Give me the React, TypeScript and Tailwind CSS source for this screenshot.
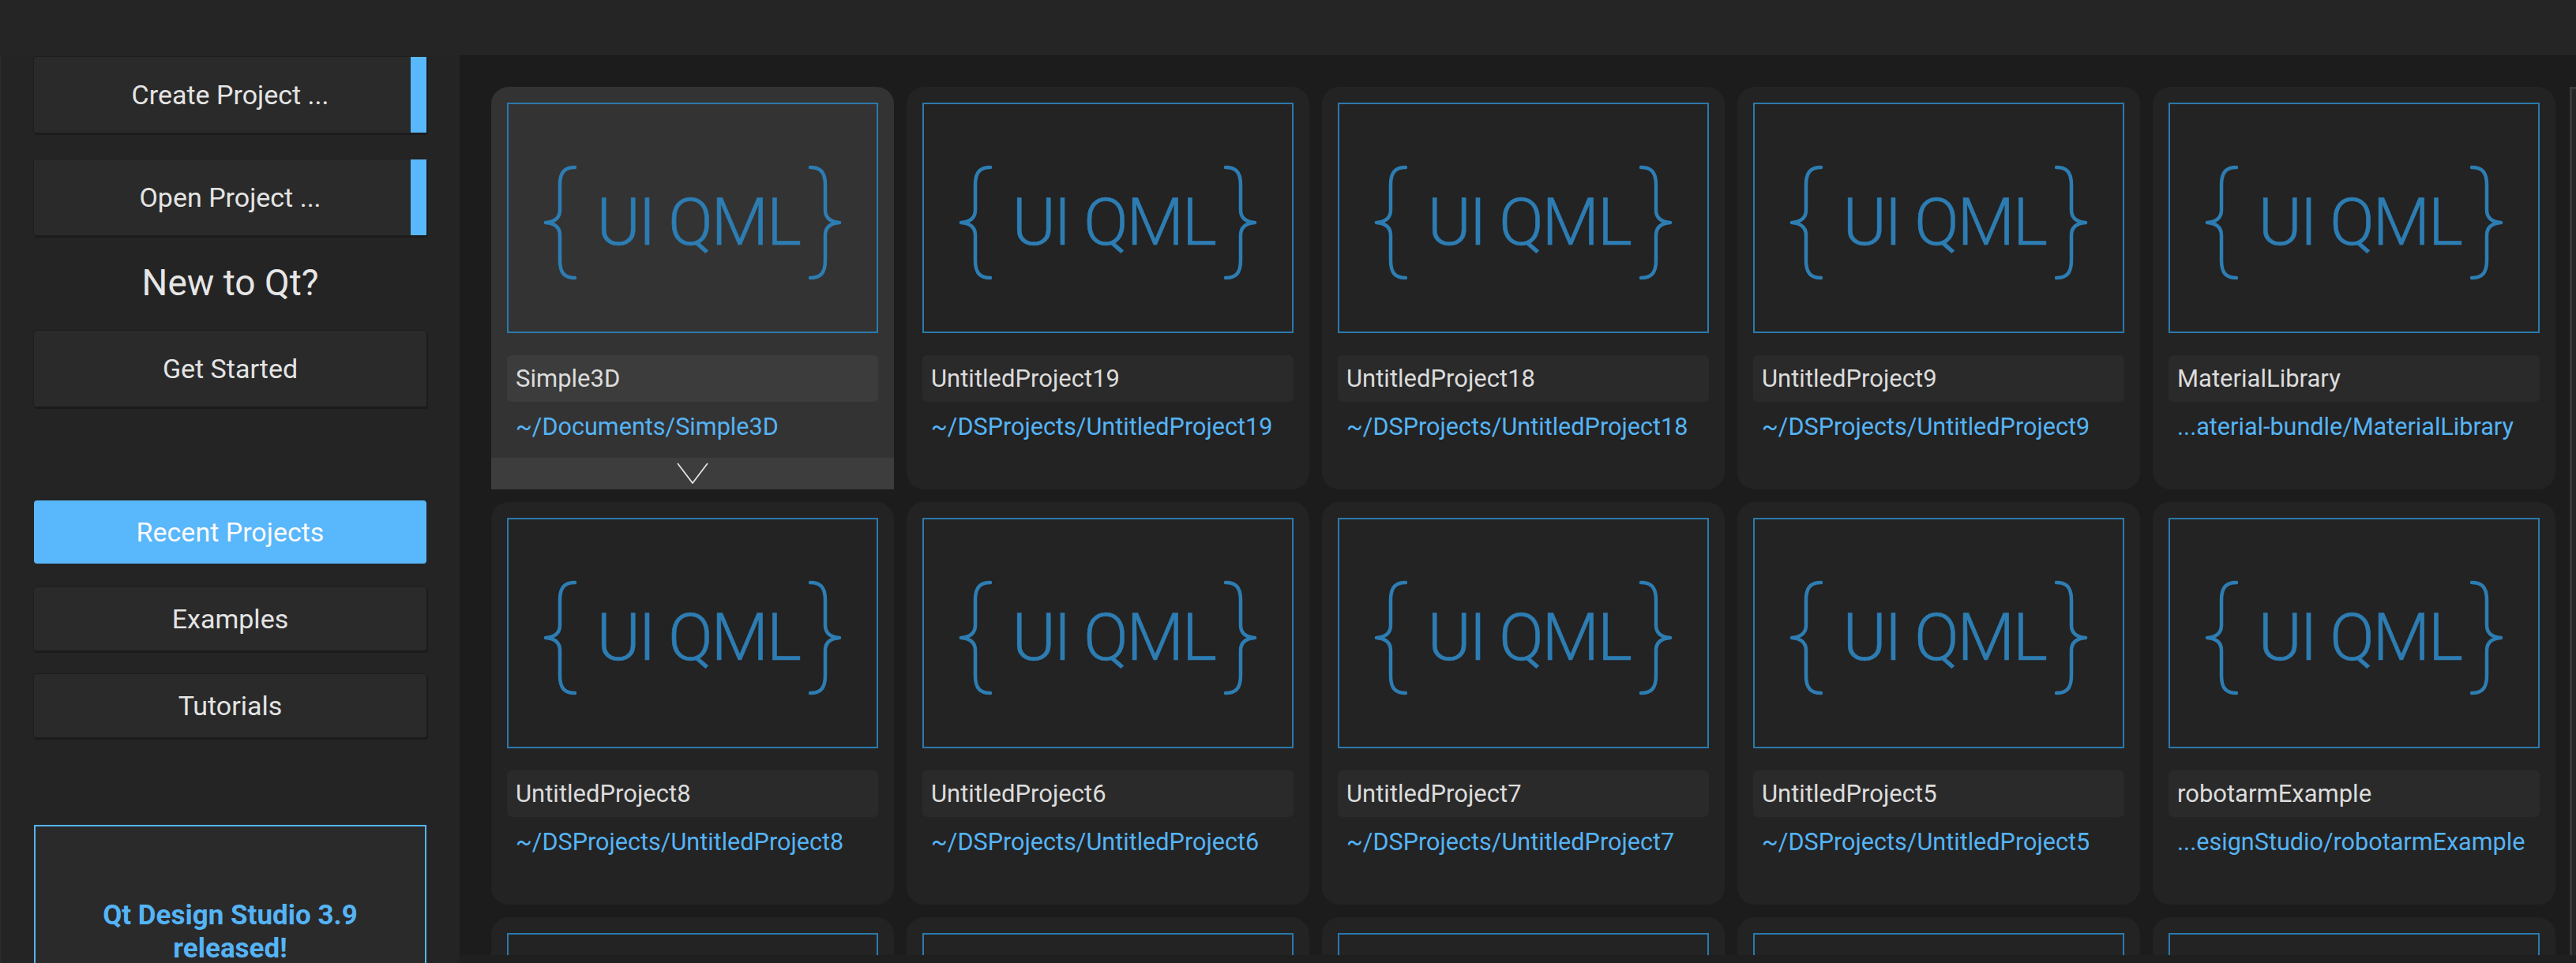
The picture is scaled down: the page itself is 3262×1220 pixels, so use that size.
import React from "react";

type CardData = { name: string; path: string; hover?: boolean };

const row1: CardData[] = [
  { name: "Simple3D", path: "~/Documents/Simple3D", hover: true },
  { name: "UntitledProject19", path: "~/DSProjects/UntitledProject19" },
  { name: "UntitledProject18", path: "~/DSProjects/UntitledProject18" },
  { name: "UntitledProject9", path: "~/DSProjects/UntitledProject9" },
  { name: "MaterialLibrary", path: "...aterial-bundle/MaterialLibrary" },
];

const row2: CardData[] = [
  { name: "UntitledProject8", path: "~/DSProjects/UntitledProject8" },
  { name: "UntitledProject6", path: "~/DSProjects/UntitledProject6" },
  { name: "UntitledProject7", path: "~/DSProjects/UntitledProject7" },
  { name: "UntitledProject5", path: "~/DSProjects/UntitledProject5" },
  { name: "robotarmExample", path: "...esignStudio/robotarmExample" },
];

function BraceLeft() {
  return (
    <svg width="42" height="146" viewBox="0 0 42 146" fill="none" stroke="#2d7db3" strokeWidth="4.5" strokeLinecap="round" strokeLinejoin="round">
      <path d="M40 3 C28 3 21 8 21 25 L21 57 C21 67 15 72 3 73 C15 74 21 79 21 89 L21 121 C21 138 28 143 40 143" />
    </svg>
  );
}

function BraceRight() {
  return (
    <svg width="42" height="146" viewBox="0 0 42 146" fill="none" stroke="#2d7db3" strokeWidth="4.5" strokeLinecap="round" strokeLinejoin="round">
      <path d="M2 3 C14 3 21 8 21 25 L21 57 C21 67 27 72 39 73 C27 74 21 79 21 89 L21 121 C21 138 14 143 2 143" />
    </svg>
  );
}

function Logo() {
  return (
    <div className="flex items-center pt-[12px]">
      <BraceLeft />
      <span className="ml-[26px] mr-[12px] text-[84px] font-light leading-none tracking-[-0.03em] text-[#2d7db3] [-webkit-text-stroke:0.6px_#2d7db3]">
        UI QML
      </span>
      <BraceRight />
    </div>
  );
}

function Card({ data }: { data: CardData }) {
  const hover = !!data.hover;
  return (
    <div
      className={
        hover
          ? "w-[510px] h-[510px] flex flex-col bg-[#333333] rounded-t-[22px]"
          : "w-[510px] h-[510px] flex flex-col bg-[#232323] rounded-[22px]"
      }
    >
      <div className="px-[20px] pt-[20px] flex flex-col">
        <div className="h-[292px] border-2 border-[#2b79ab] flex items-center justify-center">
          <Logo />
        </div>
        <div
          className={
            hover
              ? "mt-[28px] h-[59px] rounded-[6px] bg-[#3c3c3c] pl-[11px] text-[31px] leading-[59px] text-[#dcdcdc]"
              : "mt-[28px] h-[59px] rounded-[6px] bg-[#2a2a2a] pl-[11px] text-[31px] leading-[59px] text-[#dcdcdc]"
          }
        >
          {data.name}
        </div>
        <div className="mt-[12px] h-[40px] pl-[11px] text-[30.6px] leading-[40px] text-[#55b4f6] whitespace-nowrap">
          {data.path}
        </div>
      </div>
      <div className="flex-1" />
      {hover && (
        <div className="h-[40px] bg-[#3d3d3d] flex items-start justify-center pt-[6px]">
          <svg width="40" height="27" viewBox="0 0 40 27" fill="none" stroke="#e2e2e2" strokeWidth="1.8">
            <polyline points="1,1 20,26 39,1" />
          </svg>
        </div>
      )}
    </div>
  );
}

function PartialCard() {
  return (
    <div className="w-[510px] h-[510px] bg-[#232323] rounded-[22px] px-[20px] pt-[20px]">
      <div className="h-[292px] border-2 border-[#2b79ab]" />
    </div>
  );
}

function SideButton({ label, strip, h, mt }: { label: string; strip?: boolean; h: string; mt: string }) {
  return (
    <div className={`${mt} ${h} shrink-0 mx-[42px] flex bg-[#2a2a2a] rounded-[3px] shadow-[0_0_0_1px_#1e1e1e,1px_2px_0_1px_#1b1b1b]`}>
      <div
        className={
          strip
            ? "flex-1 flex items-center justify-center pl-[20px] text-[34px] text-[#e4e4e4]"
            : "flex-1 flex items-center justify-center text-[34px] text-[#e4e4e4]"
        }
      >
        {label}
      </div>
      {strip && <div className="w-[20px] bg-[#59b7fb]" />}
    </div>
  );
}

export default function App() {
  return (
    <div className="w-[3262px] h-[1220px] overflow-hidden flex flex-col bg-[#242424] font-['Roboto',sans-serif]">
      <div className="h-[70px] shrink-0 bg-[#252525]" />
      <div className="flex flex-1 min-h-0">
        <div className="w-[582px] shrink-0 bg-[#242424] border-l border-[#2c2c2c] flex flex-col overflow-hidden">
          <SideButton label="Create Project ..." strip h="h-[96px]" mt="mt-[2px]" />
          <SideButton label="Open Project ..." strip h="h-[96px]" mt="mt-[34px]" />
          <div className="h-[121px] shrink-0 flex items-center justify-center text-[46px] text-[#e6e6e6]">
            New to Qt?
          </div>
          <SideButton label="Get Started" h="h-[96px]" mt="mt-0" />
          <div className="mt-[119px] mx-[42px] h-[80px] shrink-0 rounded-[4px] bg-[#59b7fb] flex items-center justify-center text-[34px] text-[#fafafa]">
            Recent Projects
          </div>
          <SideButton label="Examples" h="h-[80px]" mt="mt-[30px]" />
          <SideButton label="Tutorials" h="h-[80px]" mt="mt-[30px]" />
          <div className="mt-[111px] mx-[42px] h-[300px] shrink-0 border-2 border-[#55b4f6] bg-[#2a2a2a] pt-[92px] text-center text-[35px] font-bold leading-[42px] text-[#55b4f6]">
            Qt Design Studio 3.9
            <br />
            released!
          </div>
        </div>
        <div className="relative flex-1 overflow-hidden bg-[#1c1c1c]">
          <div className="pl-[40px] pt-[40px] grid grid-cols-[repeat(5,510px)] gap-[16px]">
            {row1.map((c) => (
              <Card key={c.name} data={c} />
            ))}
            {row2.map((c) => (
              <Card key={c.name} data={c} />
            ))}
            {[0, 1, 2, 3, 4].map((i) => (
              <PartialCard key={i} />
            ))}
          </div>
          <div className="absolute right-0 top-[40px] bottom-[10px] w-[8px] border-l-[3px] border-t-[3px] border-[#3a3a3a] bg-[#262626]" />
          <div className="absolute left-0 right-0 bottom-0 h-[10px] bg-[#1f1f1f]" />
        </div>
      </div>
    </div>
  );
}
